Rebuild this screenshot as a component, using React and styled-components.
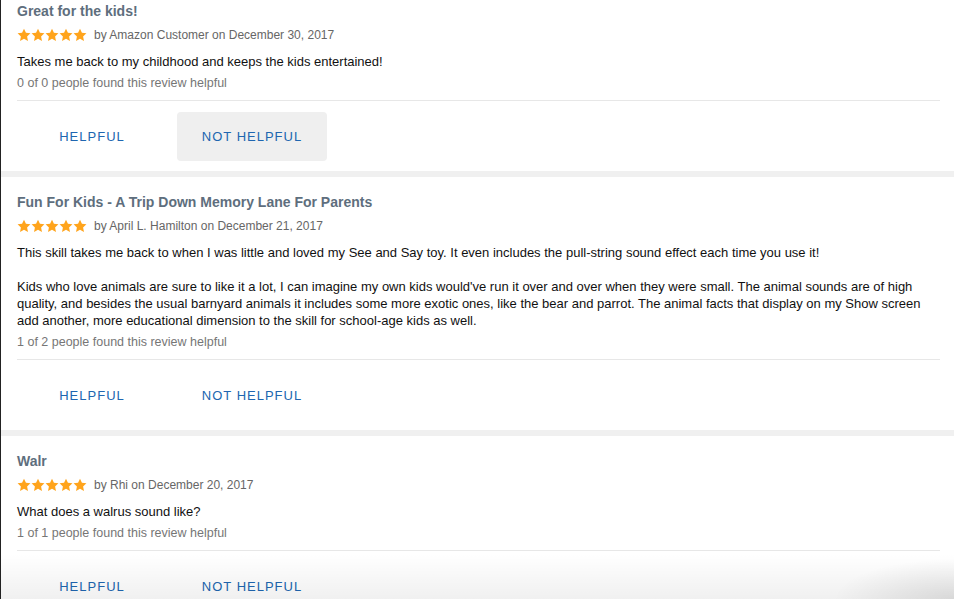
import React from 'react';
import styled, { createGlobalStyle } from 'styled-components';

const GlobalStyle = createGlobalStyle`
  html, body {
    margin: 0;
    padding: 0;
    background: #fff;
    overflow: hidden;
  }
  body {
    font-family: "Liberation Sans", Arial, sans-serif;
  }
`;

const reviews = [
  {
    title: 'Great for the kids!',
    author: 'Amazon Customer',
    date: 'December 30, 2017',
    body: ['Takes me back to my childhood and keeps the kids entertained!'],
    helpful: '0 of 0 people found this review helpful',
    pressed: true,
  },
  {
    title: 'Fun For Kids - A Trip Down Memory Lane For Parents',
    author: 'April L. Hamilton',
    date: 'December 21, 2017',
    body: [
      'This skill takes me back to when I was little and loved my See and Say toy. It even includes the pull-string sound effect each time you use it!',
      "Kids who love animals are sure to like it a lot, I can imagine my own kids would've run it over and over when they were small. The animal sounds are of high quality, and besides the usual barnyard animals it includes some more exotic ones, like the bear and parrot. The animal facts that display on my Show screen add another, more educational dimension to the skill for school-age kids as well.",
    ],
    helpful: '1 of 2 people found this review helpful',
  },
  {
    title: 'Walr',
    author: 'Rhi',
    date: 'December 20, 2017',
    body: ['What does a walrus sound like?'],
    helpful: '1 of 1 people found this review helpful',
  },
];

const Star = () => (
  <svg width="14" height="14" viewBox="0 0 24 24">
    <path
      fill="#ffa41c"
      d="M12 1.2l3.3 7.1 7.7.9-5.7 5.3 1.5 7.7L12 18.4l-6.8 3.8 1.5-7.7L1 9.2l7.7-.9z"
    />
  </svg>
);

const App = () => {
  return (
    <Page>
      <GlobalStyle />
      <List>
        {reviews.map((r, i) => (
          <Review key={i}>
            <Title>{r.title}</Title>
            <Meta>
              <Stars>
                {[0, 1, 2, 3, 4].map((s) => (
                  <Star key={s} />
                ))}
              </Stars>
              <Byline>
                by {r.author} on {r.date}
              </Byline>
            </Meta>
            <Body>
              {r.body.map((p, j) => (
                <Para key={j}>{p}</Para>
              ))}
            </Body>
            <Count>{r.helpful}</Count>
            <Divider />
            <Actions>
              <VoteButton>HELPFUL</VoteButton>
              <VoteButton $pressed={r.pressed}>NOT HELPFUL</VoteButton>
            </Actions>
          </Review>
        ))}
      </List>
      <BottomShade />
    </Page>
  );
};

export default App;

const Page = styled.div`
  position: relative;
  height: 599px;
  overflow: hidden;
  border-left: 1px solid #222;
  box-sizing: border-box;
`;

const List = styled.div`
  margin-top: -14px;
  display: flex;
  flex-direction: column;
`;

const Review = styled.div`
  padding: 16px 14px 10px 16px;
  border-bottom: 6px solid #f0f0f0;
`;

const Title = styled.div`
  font-size: 14px;
  font-weight: bold;
  line-height: 18px;
  color: #5e6e7d;
`;

const Meta = styled.div`
  margin-top: 5px;
  display: flex;
  align-items: center;
  gap: 7px;
  height: 20px;
`;

const Stars = styled.div`
  display: flex;
`;

const Byline = styled.span`
  font-size: 12px;
  color: #666;
`;

const Body = styled.div`
  margin-top: 8px;
  font-size: 13px;
  line-height: 17px;
  color: #111;
  display: flex;
  flex-direction: column;
  gap: 17px;
`;

const Para = styled.p`
  margin: 0;
`;

const Count = styled.div`
  margin-top: 5px;
  font-size: 12.5px;
  line-height: 16px;
  color: #767676;
`;

const Divider = styled.div`
  margin-top: 9px;
  height: 1px;
  background: #e7e7e7;
`;

const Actions = styled.div`
  margin-top: 11px;
  display: flex;
  gap: 10px;
`;

const VoteButton = styled.button`
  width: 150px;
  height: 49px;
  padding: 0;
  border: none;
  border-radius: 4px;
  background: ${(p) => (p.$pressed ? '#efefef' : 'transparent')};
  color: #2066b0;
  font-family: inherit;
  font-size: 13px;
  letter-spacing: 1px;
  cursor: pointer;
`;

const BottomShade = styled.div`
  position: absolute;
  left: 0;
  right: 0;
  bottom: 0;
  height: 45px;
  pointer-events: none;
  background: radial-gradient(ellipse 120px 40px at 100% 100%, rgba(0, 0, 0, 0.1), rgba(0, 0, 0, 0)),
    linear-gradient(to bottom, rgba(0, 0, 0, 0), rgba(0, 0, 0, 0.06));
`;
